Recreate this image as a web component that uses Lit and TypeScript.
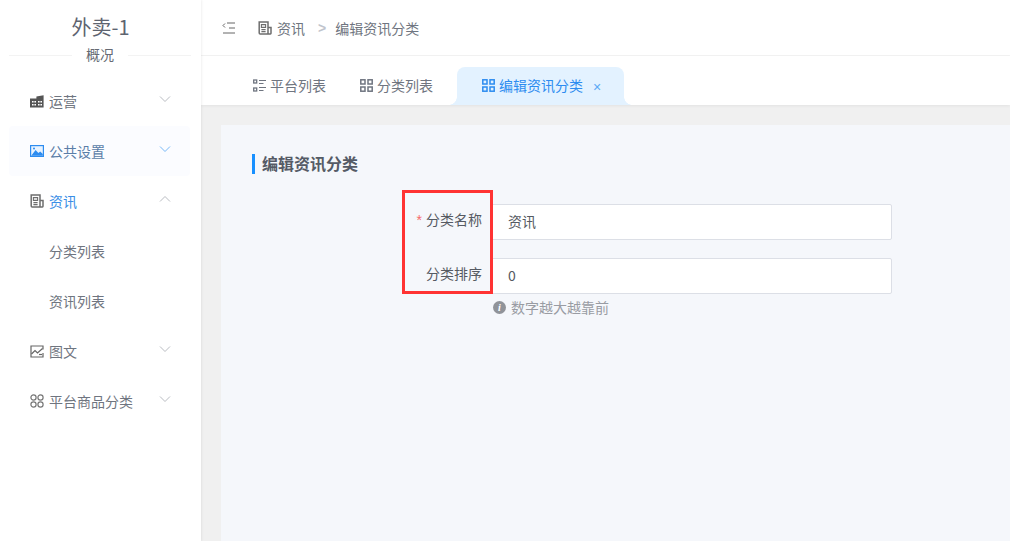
import { LitElement, html, css } from "lit";
import { customElement } from "lit/decorators.js";

const chev = (up: boolean) => html`<svg class="chev" width="12" height="8" viewBox="0 0 12 8" fill="none" stroke="currentColor" stroke-width="1"><path d=${up ? "M1 6.5 6 1.5l5 5" : "M1 1.5l5 5 5-5"} /></svg>`;

const newsIcon = (s = 14) => html`<svg width=${s} height=${s} viewBox="0 0 14 14" fill="none" stroke="#6e6e6e" stroke-width="1.5"><path d="M10 12.9H2.2a1 1 0 0 1-1-1V.9h8.8v12h2.4a.6.6 0 0 0 .6-.6V6.4H10"/><path d="M3.4 3.6h4.2v2.8H3.4zM3.4 8.6h4.2M3.4 10.6h4.2" stroke-width="1.1"/></svg>`;

const gridIcon = html`<svg width="13" height="13" viewBox="0 0 13 13" fill="none" stroke="currentColor" stroke-width="1.5"><rect x="0.8" y="0.8" width="4.2" height="4.2"/><rect x="8" y="0.8" width="4.2" height="4.2"/><rect x="0.8" y="8" width="4.2" height="4.2"/><rect x="8" y="8" width="4.2" height="4.2"/></svg>`;

const listIcon = html`<svg width="13" height="13" viewBox="0 0 13 13" fill="none" stroke="currentColor" stroke-width="1.3"><rect x="0.7" y="1" width="3" height="3"/><rect x="0.7" y="9" width="3" height="3"/><path d="M6 1.5h7M6 4.5h4.5M6 8.5h7M6 11.5h4.5" stroke-width="1.1"/></svg>`;

const icons: Record<string, unknown> = {
  shop: html`<svg width="14" height="13" viewBox="0 0 14 13"><path fill="#555" d="M0 3.5h6.4V1.6L13.6.2V12.5H0z"/><path fill="#fff" d="M2 6h1.6v1.5H2zM4.4 6H6v1.5H4.4zM2 9h1.6v1.5H2zM4.4 9H6v1.5H4.4zM8 6h1.6v1.5H8zM10.4 6H12v1.5h-1.6zM8 9h1.6v1.5H8zM10.4 9H12v1.5h-1.6z"/></svg>`,
  image: html`<svg width="14" height="12" viewBox="0 0 14 12"><rect width="14" height="12" fill="#2d8cf0"/><rect x="1.2" y="1.2" width="11.6" height="9.6" fill="#e8f3ff"/><path fill="#2d8cf0" d="M1.2 10.8 5.6 5l2.8 3 1.8-1.6 2.6 2.6v1.8z"/><circle cx="4" cy="3.6" r="1" fill="#2d8cf0"/></svg>`,
  news: newsIcon(14),
  pic: html`<svg width="14" height="13" viewBox="0 0 14 13" fill="none" stroke="#666" stroke-width="1.2"><path d="M13 4.5V1H1v11h12V8"/><path d="M1.5 9 5 5.5l2.5 2.5L12.5 3.5"/><path d="M9 9.5h3" /></svg>`,
  cats: html`<svg width="14" height="14" viewBox="0 0 14 14" fill="none" stroke="#777" stroke-width="1.2"><circle cx="3.5" cy="3.5" r="2.6"/><circle cx="10.5" cy="3.5" r="2.6"/><circle cx="3.5" cy="10.5" r="2.6"/><circle cx="10.5" cy="10.5" r="2.6"/></svg>`,
};

@customElement("app-root")
export class AppRoot extends LitElement {
  static styles = css`
    :host {
      display: block;
      width: 1010px;
      height: 541px;
      overflow: hidden;
      font-family: "Noto Sans CJK SC", "Liberation Sans", sans-serif;
      font-size: 14px;
      color: #606266;
      background: #fff;
    }
    .app { display: flex; height: 541px; }
    .side {
      width: 201px;
      flex: none;
      background: #fff;
      box-shadow: 1px 0 2px rgba(0, 0, 0, 0.06);
      z-index: 2;
      display: flex;
      flex-direction: column;
    }
    .brand {
      text-align: center;
      font-size: 20px;
      line-height: 28px;
      padding-top: 13px;
      color: #5e6470;
      height: 28px;
    }
    .divider {
      margin: 14px 10px 0 9px;
      height: 1px;
      background: #f3f3f3;
      display: flex;
      justify-content: center;
      align-items: center;
    }
    .divider span {
      background: #fff;
      padding: 0 14px;
      line-height: 16px;
      color: #666a73;
      margin-top: -3px;
    }
    .menu { margin-top: 20px; padding: 0 11px 0 9px; }
    .item {
      height: 50px;
      display: flex;
      align-items: center;
      padding-left: 21px;
      padding-right: 19px;
      gap: 5px;
      color: #6f7580;
      border-radius: 4px;
    }
    .item .ic { width: 14px; height: 14px; display: flex; align-items: center; justify-content: center; color: #666; }
    .item .lb { flex: 1; line-height: 16px; }
    .item.sub { padding-left: 40px; }
    .item.hl { background: #fbfcff; color: #5a7ea8; }
    .item.open .lb { color: #3a8ee6; }
    .chev { color: #b9bcc2; margin-top: -5px; }
    .item.hl .chev { color: #76b8f8; }

    .main { flex: 1; min-width: 0; display: flex; flex-direction: column; background: #f0f0f0; }
    .bar {
      height: 55px;
      background: #fff;
      border-bottom: 1px solid #f3f3f3;
      display: flex;
      align-items: center;
      padding-left: 21px;
      color: #6f7580;
      flex: none;
    }
    .crumb { display: flex; align-items: center; margin-left: 22px; gap: 5px; line-height: 16px; }
    .crumb .sep { margin: 0 4px 0 8px; color: #c0c4cc; font-family: "Liberation Sans", sans-serif; font-weight: 700; }
    .tabs {
      height: 49px;
      flex: none;
      background: #fff;
      display: flex;
      align-items: flex-end;
      padding-left: 52px;
      box-shadow: 0 1px 3px rgba(0, 0, 0, 0.06);
      z-index: 1;
    }
    .tab {
      height: 38px;
      display: flex;
      align-items: center;
      gap: 4px;
      color: #6f7580;
      padding-bottom: 2px;
      box-sizing: border-box;
      line-height: 16px;
    }
    .tab + .tab { margin-left: 34px; }
    .tab.active {
      position: relative;
      margin-left: 24px;
      width: 167px;
      padding-left: 25px;
      background: #e3f2ff;
      color: #2d8cf0;
      border-radius: 8px 8px 0 0;
    }
    .tab.active::before, .tab.active::after {
      content: "";
      position: absolute;
      bottom: 0;
      width: 8px;
      height: 8px;
      background: radial-gradient(circle at 0 0, transparent 7.5px, #e3f2ff 8px);
    }
    .tab.active::before { left: -8px; }
    .tab.active::after { right: -8px; transform: scaleX(-1); }
    .tab .x { margin-left: 6px; font-size: 14px; color: #5ba8f5; font-family: "Liberation Sans", sans-serif; padding-top: 3px; }
    .content { flex: 1; min-height: 0; padding: 20px 0 0 20px; }
    .card { height: 100%; background: #f5f7fb; padding-top: 29px; box-sizing: border-box; position: relative; }
    .title {
      margin-left: 31px;
      border-left: 3px solid #1890ff;
      padding-left: 7px;
      height: 20px;
      line-height: 18px;
      font-size: 16px;
      font-weight: 700;
      color: #555b66;
    }
    .form { margin-top: 30px; margin-left: 181px; width: 490px; position: relative; }
    .row { display: flex; height: 36px; margin-bottom: 18px; }
    .label {
      width: 80px;
      margin-right: 9px;
      text-align: right;
      line-height: 30px;
      color: #555a62;
      flex: none;
    }
    .req { color: #f56c6c; margin-right: 4px; font-family: "Liberation Sans", sans-serif; }
    .input {
      flex: 1;
      box-sizing: border-box;
      height: 36px;
      border: 1px solid #dcdfe6;
      border-radius: 2px;
      background: #fff;
      padding-left: 16px;
      line-height: 32px;
      color: #555a62;
    }
    .hint {
      margin: -13px 0 0 91px;
      display: flex;
      align-items: center;
      gap: 5px;
      line-height: 17px;
      color: #999ca3;
    }
    .hint .i {
      width: 13px;
      height: 13px;
      border-radius: 50%;
      background: #909399;
      color: #fff;
      font: italic 700 10px/13px "Liberation Serif", serif;
      text-align: center;
    }
    .mark {
      position: absolute;
      left: 0;
      top: -14px;
      width: 91px;
      height: 104px;
      box-sizing: border-box;
      border: 3px solid #f33;
      pointer-events: none;
    }
  `;

  private menuItem(label: string, icon?: string, opts: { hl?: boolean; open?: boolean; up?: boolean; sub?: boolean } = {}) {
    const cls = ["item", opts.hl ? "hl" : "", opts.open ? "open" : "", opts.sub ? "sub" : ""].join(" ");
    return html`<div class=${cls}>
      ${icon ? html`<span class="ic">${icons[icon]}</span>` : ""}
      <span class="lb">${label}</span>
      ${opts.sub ? "" : chev(!!opts.up)}
    </div>`;
  }

  render() {
    return html`<div class="app">
      <aside class="side">
        <div class="brand">外卖-1</div>
        <div class="divider"><span>概况</span></div>
        <nav class="menu">
          ${this.menuItem("运营", "shop")}
          ${this.menuItem("公共设置", "image", { hl: true })}
          ${this.menuItem("资讯", "news", { open: true, up: true })}
          ${this.menuItem("分类列表", undefined, { sub: true })}
          ${this.menuItem("资讯列表", undefined, { sub: true })}
          ${this.menuItem("图文", "pic")}
          ${this.menuItem("平台商品分类", "cats")}
        </nav>
      </aside>
      <main class="main">
        <div class="bar">
          <svg width="14" height="12" viewBox="0 0 14 12" fill="none" stroke="#666" stroke-width="1"><path d="M3 1.5 1 3.5l2 2M5 1h8M7 6h6M1 11h12"/></svg>
          <div class="crumb">${newsIcon(14)}<span>资讯</span><span class="sep">&gt;</span><span>编辑资讯分类</span></div>
        </div>
        <div class="tabs">
          <div class="tab">${listIcon}<span>平台列表</span></div>
          <div class="tab">${gridIcon}<span>分类列表</span></div>
          <div class="tab active">${gridIcon}<span>编辑资讯分类</span><span class="x">×</span></div>
        </div>
        <div class="content">
          <div class="card">
            <div class="title">编辑资讯分类</div>
            <div class="form">
              <div class="row"><div class="label"><span class="req">*</span>分类名称</div><div class="input">资讯</div></div>
              <div class="row"><div class="label">分类排序</div><div class="input">0</div></div>
              <div class="hint"><span class="i">i</span><span>数字越大越靠前</span></div>
              <div class="mark"></div>
            </div>
          </div>
        </div>
      </main>
    </div>`;
  }
}
